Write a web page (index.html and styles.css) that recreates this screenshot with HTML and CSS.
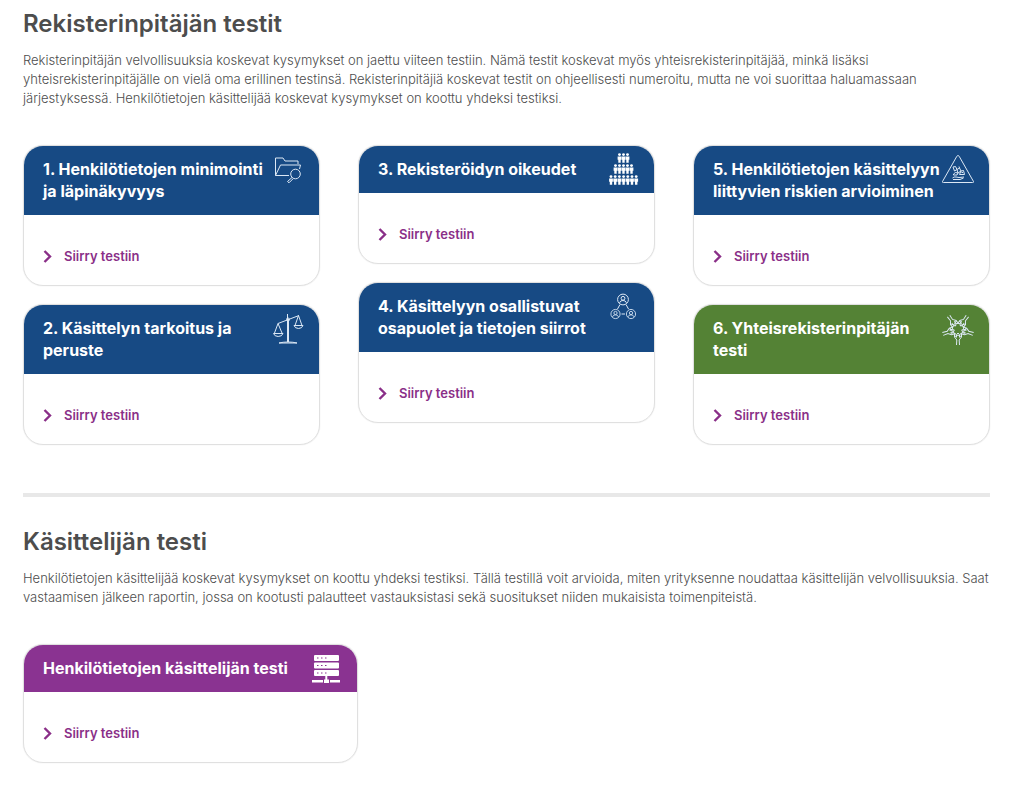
FILE: index.html
```html
<!DOCTYPE html>
<html lang="fi">
<head>
    <meta charset="UTF-8">
    <meta name="viewport" content="width=device-width, initial-scale=1.0">
    <title>Rekisterinpitäjän testit</title>
    <link rel="stylesheet" href="styles.css">
</head>
<body>

<!-- Toistuvat kuvakkeen osat -->
<svg class="symbols" aria-hidden="true">
    <symbol id="chevron" viewBox="0 0 9 13">
        <path d="M1.5 1 L7 6.500 L1.500 12" fill="none" stroke="currentColor" stroke-width="2.400"/>
    </symbol>
    <g id="person">
        <circle cx="0" cy="1.600" r="1.400"/>
        <path d="M-1.900 3.400 H1.900 V6.800 H1.200 V9.800 H-1.200 V6.800 H-1.900 Z"/>
    </g>
    <g id="member">
        <circle r="5.400"/>
        <circle cy="-1.200" r="1.900"/>
        <path d="M-3.200 3.700 V2.800 Q-2.600 1 0 1 Q2.600 1 3.200 2.800 V3.700"/>
    </g>
    <g id="arm">
        <path d="M-1.500 -16 L-1.200 -11 L-3.500 -8 L-3.500 -4.500 L-1.500 -5.500 L0 -4 L1.500 -5.500 L3.500 -4.500 L3.500 -8 L1.200 -11 L1.500 -16 M-3 -7.500 L0 -6 L3 -7.500 M-1.500 -8.500 V-6 M1.500 -8.500 V-6"/>
    </g>
</svg>

<main class="page">
    <section class="tests">
        <h2>Rekisterinpitäjän testit</h2>
        <p>Rekisterinpitäjän velvollisuuksia koskevat kysymykset on jaettu viiteen testiin. Nämä testit koskevat myös yhteisrekisterinpitäjää, minkä lisäksi yhteisrekisterinpitäjälle on vielä oma erillinen testinsä. Rekisterinpitäjiä koskevat testit on ohjeellisesti numeroitu, mutta ne voi suorittaa haluamassaan järjestyksessä. Henkilötietojen käsittelijää koskevat kysymykset on koottu yhdeksi testiksi.</p>

        <div class="card-grid">
            <div class="card-column">
                <article class="card">
                    <header class="card-header">
                        <h3>1. Henkilötietojen minimointi ja läpinäkyvyys</h3>
                        <svg class="icon" viewBox="0 0 34 34" aria-hidden="true">
                            <path d="M4.500 22.500 V5 H12 L14 8 H27 V11 M4.500 22.500 L9.500 12 H29.500 L28.500 16 M4.500 22.500 H18"/>
                            <circle cx="24.500" cy="21" r="4.800"/>
                            <path d="M21 24.500 L16.500 28.500 M22.300 25.500 L18 29.800 M16.500 28.500 L18 29.800"/>
                        </svg>
                    </header>
                    <div class="card-body">
                        <a href="#testi-1"><svg class="chevron" aria-hidden="true"><use href="#chevron"/></svg>Siirry testiin</a>
                    </div>
                </article>
                <article class="card">
                    <header class="card-header">
                        <h3>2. Käsittelyn tarkoitus ja peruste</h3>
                        <svg class="icon" viewBox="0 0 34 34" aria-hidden="true">
                            <path d="M16.500 2 V30 M17.500 7 V30 M8 31 Q12 30 17 30 Q22 30 26 31 Z M7 11.500 L28 3.500"/>
                            <circle cx="17" cy="7.500" r="1.500"/>
                            <path d="M7 11.500 L3.500 21 M7 11.500 L11 21 M2.500 21.500 H12 Q11 24.500 7.200 24.500 Q3.500 24.500 2.500 21.500 Z M27.500 3.500 L24 13.500 M27.500 3.500 L31 13.500 M23 13.500 H32 Q31 16.500 27.500 16.500 Q24 16.500 23 13.500 Z"/>
                        </svg>
                    </header>
                    <div class="card-body">
                        <a href="#testi-2"><svg class="chevron" aria-hidden="true"><use href="#chevron"/></svg>Siirry testiin</a>
                    </div>
                </article>
            </div>

            <div class="card-column">
                <article class="card">
                    <header class="card-header">
                        <h3>3. Rekisteröidyn oikeudet</h3>
                        <svg class="icon solid" viewBox="0 0 34 34" aria-hidden="true">
                            <use href="#person" x="13.500" y="0"/><use href="#person" x="17.500" y="0"/><use href="#person" x="21.500" y="0"/>
                            <use href="#person" x="9.500" y="11"/><use href="#person" x="13.500" y="11"/><use href="#person" x="17.500" y="11"/><use href="#person" x="21.500" y="11"/><use href="#person" x="25.500" y="11"/>
                            <use href="#person" x="5" y="22"/><use href="#person" x="9.200" y="22"/><use href="#person" x="13.400" y="22"/><use href="#person" x="17.600" y="22"/><use href="#person" x="21.800" y="22"/><use href="#person" x="26" y="22"/><use href="#person" x="30.200" y="22"/>
                        </svg>
                    </header>
                    <div class="card-body">
                        <a href="#testi-3"><svg class="chevron" aria-hidden="true"><use href="#chevron"/></svg>Siirry testiin</a>
                    </div>
                </article>
                <article class="card">
                    <header class="card-header">
                        <h3>4. Käsittelyyn osallistuvat osapuolet ja tietojen siirrot</h3>
                        <svg class="icon" viewBox="0 0 34 34" aria-hidden="true">
                            <use href="#member" x="17" y="9.500"/>
                            <use href="#member" transform="translate(9.500 24) scale(.85)"/>
                            <use href="#member" transform="translate(25 24) scale(.85)"/>
                            <path d="M14 14.500 L11.500 19 M20 14.500 L22.500 19 M15.500 24 H19"/>
                        </svg>
                    </header>
                    <div class="card-body">
                        <a href="#testi-4"><svg class="chevron" aria-hidden="true"><use href="#chevron"/></svg>Siirry testiin</a>
                    </div>
                </article>
            </div>

            <div class="card-column">
                <article class="card">
                    <header class="card-header">
                        <h3>5. Henkilötietojen käsittelyyn liittyvien riskien arvioiminen</h3>
                        <svg class="icon" viewBox="0 0 34 34" aria-hidden="true">
                            <path d="M17 2.500 Q17.800 2.500 18.400 3.700 L32.500 28.500 Q33 29.500 31.500 29.500 H2.500 Q1 29.500 1.500 28.500 L15.600 3.700 Q16.200 2.500 17 2.500 Z"/>
                            <path d="M12 14 L14.500 13.500 L16 16.500 L13.500 18 Z M16 16.500 L18.500 15 L20 18 L17 20 Z M18.500 15 L18 13.500 M12.500 21 L14.500 19.500 L17 20 L16 22 H12.500 Z M20 18 L22.500 17.500 L23.500 21.500 H18.500 Z M20.500 19.500 H22 M11.500 25 Q13 23.500 15 24 L18 24.500 L23 24 M12 26.500 H19 L22.500 25"/>
                        </svg>
                    </header>
                    <div class="card-body">
                        <a href="#testi-5"><svg class="chevron" aria-hidden="true"><use href="#chevron"/></svg>Siirry testiin</a>
                    </div>
                </article>
                <article class="card green">
                    <header class="card-header">
                        <h3>6. Yhteisrekisterinpitäjän testi</h3>
                        <svg class="icon" viewBox="0 0 34 34" aria-hidden="true">
                            <use href="#arm" transform="translate(17 17) rotate(-36)"/>
                            <use href="#arm" transform="translate(17 17) rotate(36)"/>
                            <use href="#arm" transform="translate(17 17) rotate(108)"/>
                            <use href="#arm" transform="translate(17 17) rotate(180)"/>
                            <use href="#arm" transform="translate(17 17) rotate(252)"/>
                        </svg>
                    </header>
                    <div class="card-body">
                        <a href="#testi-6"><svg class="chevron" aria-hidden="true"><use href="#chevron"/></svg>Siirry testiin</a>
                    </div>
                </article>
            </div>
        </div>
    </section>

    <hr>

    <section class="tests">
        <h2>Käsittelijän testi</h2>
        <p>Henkilötietojen käsittelijää koskevat kysymykset on koottu yhdeksi testiksi. Tällä testillä voit arvioida, miten yrityksenne noudattaa käsittelijän velvollisuuksia. Saat vastaamisen jälkeen raportin, jossa on kootusti palautteet vastauksistasi sekä suositukset niiden mukaisista toimenpiteistä.</p>

        <article class="card purple">
            <header class="card-header">
                <h3>Henkilötietojen käsittelijän testi</h3>
                <svg class="icon solid" viewBox="0 0 34 34" aria-hidden="true">
                    <rect x="5" y="3" width="25" height="6" rx="1"/>
                    <rect x="5" y="10.500" width="25" height="6" rx="1"/>
                    <rect x="5" y="18" width="25" height="6" rx="1"/>
                    <path d="M16.300 24 H18.300 V27.500 H20 V31 H15 V27.500 H16.300 Z M3 28 H14 V30.500 H3 Z M21 28 H31 V30.500 H21 Z"/>
                    <path class="lights" d="M8 6 H9.500 M12 6 H13.500 M16 6 H17.500 M8 13.500 H9.500 M12 13.500 H13.500 M16 13.500 H17.500 M8 21 H9.500 M12 21 H13.500 M16 21 H17.500"/>
                </svg>
            </header>
            <div class="card-body">
                <a href="#kasittelija"><svg class="chevron" aria-hidden="true"><use href="#chevron"/></svg>Siirry testiin</a>
            </div>
        </article>
    </section>
</main>

</body>
</html>
```
FILE: styles.css
```css
* {
    box-sizing: border-box;
}

body {
    margin: 0;
    background-color: #fff;
    color: #4d4d4d;
    font-family: Inter, "Liberation Sans", sans-serif;
    font-size: 13px;
    line-height: 19px;
}

.symbols {
    position: absolute;
    width: 0;
    height: 0;
}

.page {
    padding: 8px 34px 28px 23px;
}

h2 {
    margin: 0 0 11px;
    font-size: 24px;
    font-weight: 600;
    line-height: 32px;
}

p {
    margin: 0 0 37px;
    font-weight: 300;
}

hr {
    height: 4px;
    margin: 48px 0 29px;
    border: 0;
    background-color: #e8e8e8;
}

/* Testikortit kolmessa palstassa */
.card-grid {
    display: grid;
    grid-template-columns: repeat(3, 1fr);
    gap: 38px;
}

.card-column {
    display: flex;
    flex-direction: column;
    gap: 18px;
}

.card {
    border: 1px solid #e0e0e0;
    border-radius: 20px;
    box-shadow: 0 0 1px #d0d0d0;
    overflow: hidden;
}

.card-header {
    display: flex;
    justify-content: space-between;
    align-items: flex-start;
    padding: 0 14px 0 19px;
    background-color: #174a84;
    color: #fff;
}

.card-header h3 {
    flex: 1;
    margin: 0;
    padding: 12px 0 13px;
    font-size: 16px;
    font-weight: 700;
    line-height: 22px;
}

.green .card-header {
    background-color: #548235;
}

.purple .card-header {
    background-color: #8a3391;
}

.purple {
    max-width: 335px;
}

/* Kuvakkeet otsikon oikeassa reunassa */
.icon {
    flex: none;
    width: 34px;
    height: 34px;
    margin-top: 7px;
    fill: none;
    stroke: #dce8f5;
    stroke-width: 1;
}

.solid {
    fill: #fff;
    stroke: none;
}

.lights {
    stroke: #8a3391;
    stroke-width: 1;
}

.card-body {
    padding: 32px 19px 19px;
}

.card-body a {
    display: inline-flex;
    align-items: center;
    gap: 12px;
    color: #8a2f88;
    font-weight: 600;
    text-decoration: none;
    vertical-align: top;
}

.chevron {
    width: 9px;
    height: 13px;
}
```
